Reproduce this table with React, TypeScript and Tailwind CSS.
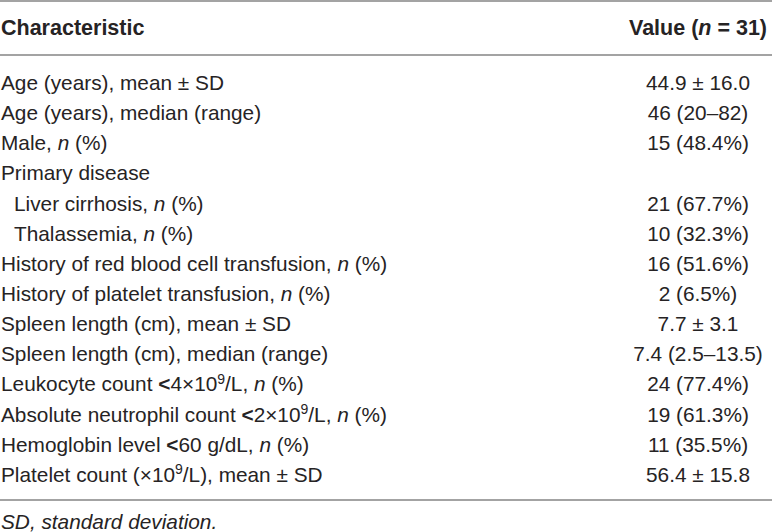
import React from "react";

type Row = { label: React.ReactNode; value: string; indent?: boolean };

const N = () => <i>n</i>;
const Lt = () => <b className="font-bold">&lt;</b>;
const E9 = () => (
  <>
    10<sup className="text-[14px] -top-[0.55em]">9</sup>
  </>
);

const rows: Row[] = [
  { label: "Age (years), mean ± SD", value: "44.9 ± 16.0" },
  { label: "Age (years), median (range)", value: "46 (20–82)" },
  { label: <>Male, <N /> (%)</>, value: "15 (48.4%)" },
  { label: "Primary disease", value: "" },
  { label: <>Liver cirrhosis, <N /> (%)</>, value: "21 (67.7%)", indent: true },
  { label: <>Thalassemia, <N /> (%)</>, value: "10 (32.3%)", indent: true },
  { label: <>History of red blood cell transfusion, <N /> (%)</>, value: "16 (51.6%)" },
  { label: <>History of platelet transfusion, <N /> (%)</>, value: "2 (6.5%)" },
  { label: "Spleen length (cm), mean ± SD", value: "7.7 ± 3.1" },
  { label: "Spleen length (cm), median (range)", value: "7.4 (2.5–13.5)" },
  { label: <>Leukocyte count <Lt />4×<E9 />/L, <N /> (%)</>, value: "24 (77.4%)" },
  { label: <>Absolute neutrophil count <Lt />2×<E9 />/L, <N /> (%)</>, value: "19 (61.3%)" },
  { label: <>Hemoglobin level <Lt />60 g/dL, <N /> (%)</>, value: "11 (35.5%)" },
  { label: <>Platelet count (×<E9 />/L), mean ± SD</>, value: "56.4 ± 15.8" },
];

export default function App() {
  return (
    <div
      className="w-[772px] h-[532px] bg-white text-[#262324] overflow-hidden"
      style={{ fontFamily: '"Liberation Sans", Arial, sans-serif' }}
    >
      <div className="border-t-2 border-[#a3a3a3]" />
      {/* header */}
      <div className="flex items-center justify-between h-[52px] pl-[1px] pr-[2px] text-[21.5px] font-bold">
        <div>Characteristic</div>
        <div className="w-[144px] text-center whitespace-nowrap">
          Value (<i>n</i> = 31)
        </div>
      </div>
      <div className="border-t-2 border-[#a3a3a3]" />

      {/* body */}
      <div className="pt-[12px] pb-[9px] text-[20.8px]">
        {rows.map((r, i) => (
          <div key={i} className="flex justify-between h-[30.15px] leading-[30.15px] pl-[1px] pr-[2px]">
            <div className={r.indent ? "pl-[13px] whitespace-nowrap" : "whitespace-nowrap"}>{r.label}</div>
            <div className="w-[144px] text-center whitespace-nowrap">{r.value}</div>
          </div>
        ))}
      </div>
      <div className="border-t-2 border-[#a3a3a3]" />

      <div className="mt-[11px] pl-[1px] text-[20.8px] leading-[20px] italic">SD, standard deviation.</div>
    </div>
  );
}
